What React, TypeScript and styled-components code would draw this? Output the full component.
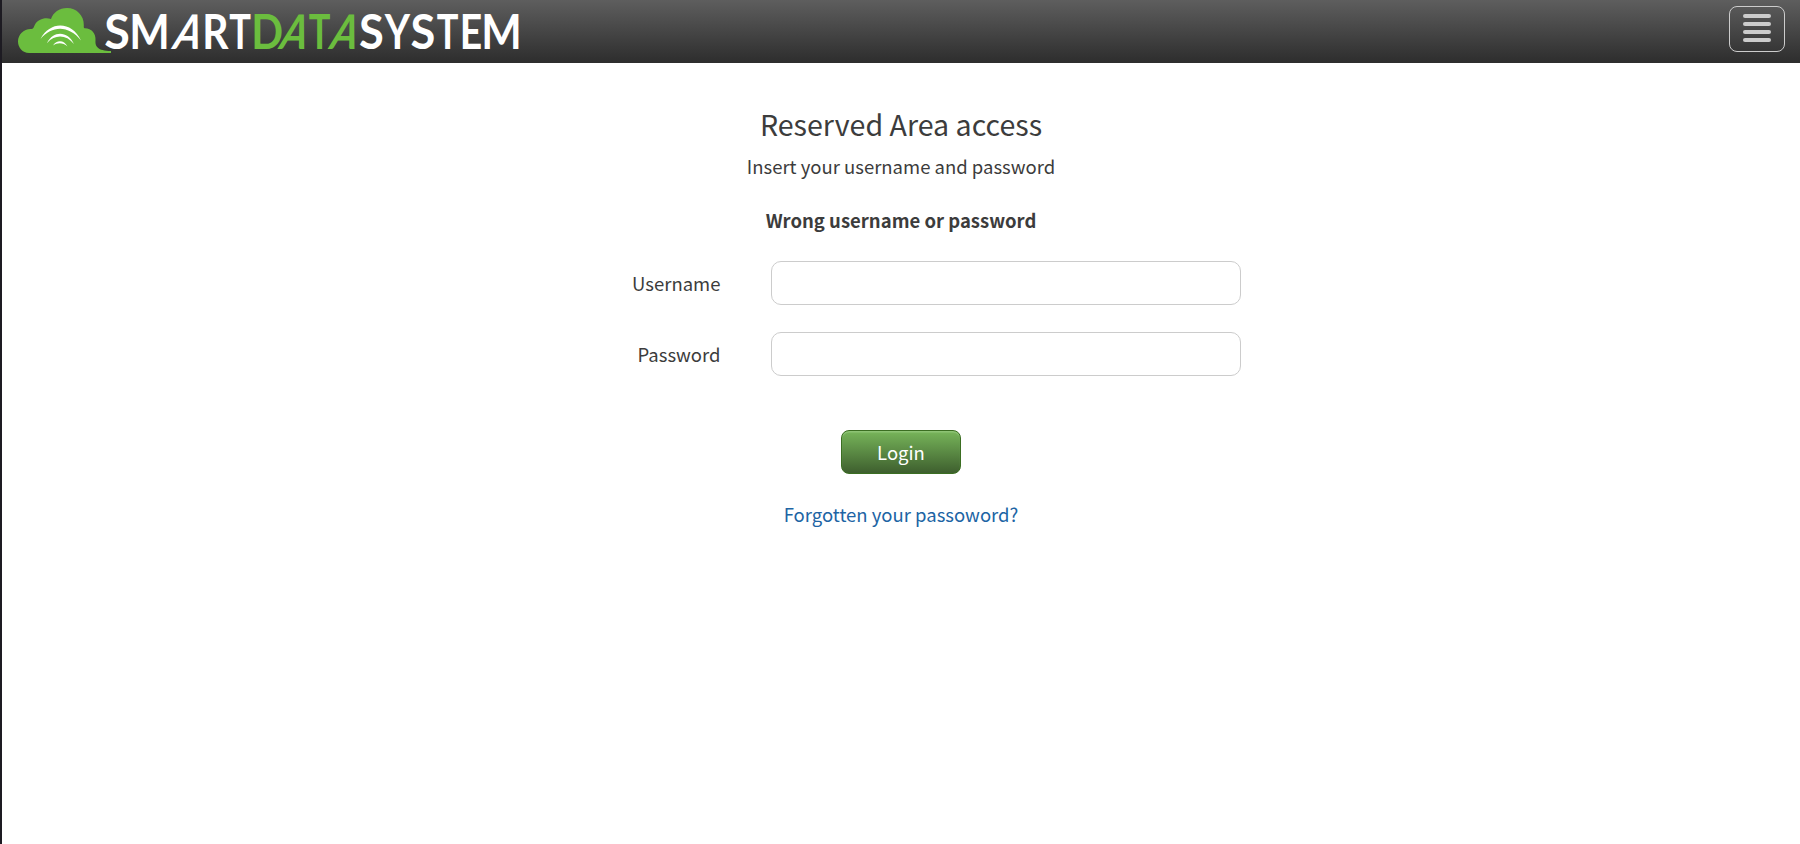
import React from "react";
import styled, { createGlobalStyle } from "styled-components";

const Global = createGlobalStyle`
  * { box-sizing: border-box; }
  body { margin: 0; background: #fff; }
`;

const Page = styled.div`
  min-height: 844px;
  border-left: 2px solid #1d1b22;
  background: #fff;
  color: #3c3c3c;
  font: 18.5px/24px "Noto Sans CJK SC", "Noto Sans", sans-serif;
`;

const Header = styled.header`
  display: flex;
  justify-content: space-between;
  height: 63px;
  padding: 0 15px;
  background: linear-gradient(#5e5e5e, #2d2d2d);
`;

const Logo = styled.svg`
  display: block;
  width: 520px;
  height: 63px;
  overflow: visible;
  font-family: Lato, sans-serif;
  font-weight: 700;
  font-size: 47.6px;
  text-anchor: middle;
`;

const MenuButton = styled.button`
  display: flex;
  flex-direction: column;
  align-items: center;
  justify-content: center;
  gap: 4px;
  width: 56px;
  height: 46px;
  margin-top: 6px;
  padding: 0 0 2px;
  border: 1px solid #ccc;
  border-radius: 8px;
  background: transparent;
`;

const Bar = styled.span`
  width: 28px;
  height: 4px;
  border-radius: 2px;
  background: #ccc;
`;

const Main = styled.main`
  display: flex;
  flex-direction: column;
  align-items: center;
  padding-top: 41px;
`;

const Title = styled.h1`
  margin: 0;
  font-size: 28.6px;
  line-height: 40px;
  font-weight: 400;
`;

const Text = styled.p`
  margin: 10px 0 0;
`;

const ErrorText = styled.p`
  margin: 30px 0 0;
  font-weight: 700;
`;

const Form = styled.form`
  display: flex;
  flex-direction: column;
  align-items: center;
  margin-top: 29px;
`;

const Field = styled.label`
  display: grid;
  grid-template-columns: 138px 470px;
  column-gap: 50px;
  align-items: center;
  text-align: right;
  margin: 0 0 27px 21px;
`;

const Input = styled.input`
  height: 44px;
  padding: 0 12px;
  border: 1px solid #ccc;
  border-radius: 10px;
  background: #fff;
  font: inherit;
`;

const LoginButton = styled.button`
  width: 120px;
  height: 44px;
  margin-top: 27px;
  padding: 0 0 1px;
  border: 1px solid #3b6e22;
  border-radius: 8px;
  background: linear-gradient(#77b55a, #3e5f2e);
  box-shadow: inset 0 2px 1px -0.5px #8fc477;
  color: #fff;
  font: inherit;
`;

const Link = styled.a`
  margin-top: 28px;
  color: #2064a4;
  text-decoration: none;
`;

type Glyph = { c: string; x: number; sx: number; green?: boolean; skew?: boolean };

const glyphs: Glyph[] = [
  { c: "S", x: 117, sx: 0.98 },
  { c: "M", x: 149.5, sx: 0.9 },
  { c: "A", x: 184.3, sx: 0.8, skew: true },
  { c: "R", x: 215.3, sx: 0.86 },
  { c: "T", x: 240, sx: 0.76 },
  { c: "D", x: 267.3, sx: 0.88, green: true },
  { c: "A", x: 290.8, sx: 0.8, green: true, skew: true },
  { c: "T", x: 319.5, sx: 0.76, green: true },
  { c: "A", x: 341, sx: 0.8, green: true, skew: true },
  { c: "S", x: 371.5, sx: 0.95 },
  { c: "Y", x: 397.5, sx: 0.82 },
  { c: "S", x: 423, sx: 0.95 },
  { c: "T", x: 447.5, sx: 0.76 },
  { c: "E", x: 471, sx: 0.82 },
  { c: "M", x: 501.5, sx: 0.9 },
];

function Brand() {
  return (
    <Logo viewBox="17 0 520 63" role="img" aria-label="SmartDataSystem">
      <path
        fill="#6bbd3e"
        d="M29 53C22.500 53 18 47.500 18 41.500C18 34.500 24 28.500 31.500 29C34 28.500 33.500 27 35 24.500C38 19.500 44.500 17 51 19C53 12.500 59.500 8 67 8C76.500 8 84 15.500 83.800 25C83.800 27 83.500 28.500 85 28.300C91.500 28.300 96 34 95.500 40C95 46.500 97.500 50.800 111 51V53Z"
      />
      <g fill="#fff">
        <path d="M40.500 39C50 20.500 72 21 81 40.500C69 25.500 52.500 25 40.500 39Z" />
        <path d="M47 43C53.500 30 68 31 74 44C66 34.500 55.500 34 47 43Z" />
        <path d="M53 45.500C57 39.500 64 40 67.500 46.500C63 42.500 57.500 42.500 53 45.500Z" />
      </g>
      {glyphs.map((g, i) => (
        <text
          key={i}
          fill={g.green ? "#6bbd3e" : "#fff"}
          transform={`translate(${g.x} 49) skewX(${g.skew ? -17 : 0}) scale(${g.sx} 1)`}
        >
          {g.c}
        </text>
      ))}
    </Logo>
  );
}

export default function App() {
  return (
    <Page>
      <Global />
      <Header>
        <Brand />
        <MenuButton aria-label="Menu">
          <Bar />
          <Bar />
          <Bar />
          <Bar />
        </MenuButton>
      </Header>
      <Main>
        <Title>Reserved Area access</Title>
        <Text>Insert your username and password</Text>
        <ErrorText>Wrong username or password</ErrorText>
        <Form>
          <Field>
            Username
            <Input type="text" />
          </Field>
          <Field>
            Password
            <Input type="password" />
          </Field>
          <LoginButton type="button">Login</LoginButton>
        </Form>
        <Link>Forgotten your passoword?</Link>
      </Main>
    </Page>
  );
}
